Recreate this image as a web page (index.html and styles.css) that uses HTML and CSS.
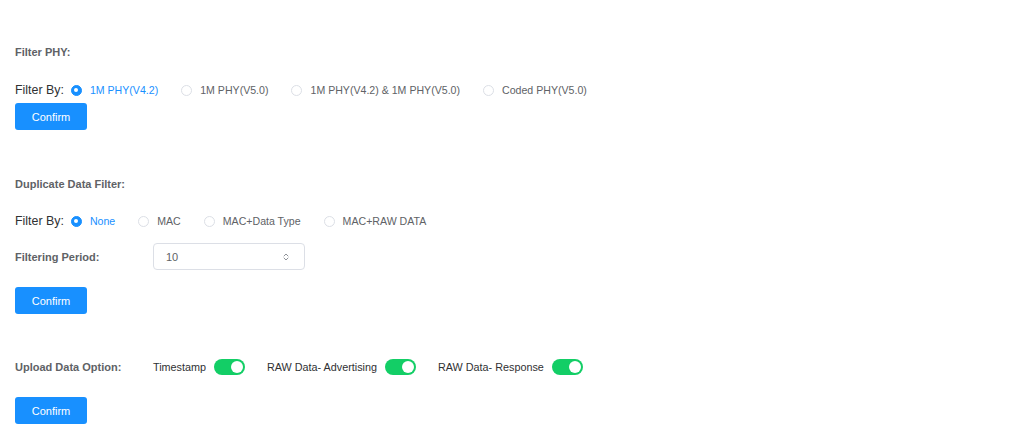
FILE: index.html
```html
<!DOCTYPE html>
<html>
<head>
<meta charset="utf-8">
<link rel="stylesheet" href="styles.css">
</head>
<body>
<div class="page">
  <section class="sec sec-phy">
    <div class="title">Filter PHY:</div>
    <div class="filter-row">
      <span class="filter-by">Filter By:</span>
      <label class="radio checked"><span class="dot"></span><span class="rl">1M PHY(V4.2)</span></label>
      <label class="radio"><span class="dot"></span><span class="rl">1M PHY(V5.0)</span></label>
      <label class="radio"><span class="dot"></span><span class="rl">1M PHY(V4.2) &amp; 1M PHY(V5.0)</span></label>
      <label class="radio"><span class="dot"></span><span class="rl">Coded PHY(V5.0)</span></label>
    </div>
    <button class="btn btn-1">Confirm</button>
  </section>

  <section class="sec sec-dup">
    <div class="title">Duplicate Data Filter:</div>
    <div class="filter-row">
      <span class="filter-by">Filter By:</span>
      <label class="radio checked"><span class="dot"></span><span class="rl">None</span></label>
      <label class="radio"><span class="dot"></span><span class="rl">MAC</span></label>
      <label class="radio"><span class="dot"></span><span class="rl">MAC+Data Type</span></label>
      <label class="radio"><span class="dot"></span><span class="rl">MAC+RAW DATA</span></label>
    </div>
    <div class="form-row period-row">
      <span class="form-label">Filtering Period:</span>
      <div class="num-input">
        <span class="num-val">10</span>
        <svg class="spin" width="8" height="10" viewBox="0 0 8 10"><path d="M2 4 L4 2 L6 4 M2 6 L4 8 L6 6" fill="none" stroke="#909399" stroke-width="1" stroke-linecap="round" stroke-linejoin="round"/></svg>
      </div>
    </div>
    <button class="btn btn-2">Confirm</button>
  </section>

  <section class="sec sec-upload">
    <div class="form-row upload-row">
      <span class="form-label">Upload Data Option:</span>
      <div class="switches">
        <span class="sw-item"><span class="sw-text">Timestamp</span><span class="switch"><span class="knob"></span></span></span>
        <span class="sw-item"><span class="sw-text">RAW Data- Advertising</span><span class="switch"><span class="knob"></span></span></span>
        <span class="sw-item"><span class="sw-text">RAW Data- Response</span><span class="switch"><span class="knob"></span></span></span>
      </div>
    </div>
    <button class="btn btn-3">Confirm</button>
  </section>
</div>
</body>
</html>
```

FILE: styles.css
```css
* { box-sizing: border-box; }
html, body { margin: 0; padding: 0; background: #fff; }
body {
  font-family: "Liberation Sans", Arial, Helvetica, sans-serif;
  color: #606266;
  width: 1014px;
  height: 438px;
  overflow: hidden;
}
.page { padding: 0 15px; }
.sec { display: flex; flex-direction: column; align-items: flex-start; }

.title {
  font-size: 11px;
  font-weight: bold;
  line-height: 16px;
  height: 16px;
  color: #606266;
}
.sec-phy .title { margin-top: 44px; }
.sec-dup .title { margin-top: 46px; }

.filter-row {
  display: flex;
  align-items: center;
  height: 20px;
}
.sec-phy .filter-row { margin-top: 20px; }
.sec-dup .filter-row { margin-top: 19px; }

.filter-by {
  font-size: 12.4px;
  color: #303133;
  margin-right: 7px;
}
.radio {
  display: flex;
  align-items: center;
  margin-right: 23px;
  font-size: 10.6px;
  color: #606266;
}
.radio .dot {
  width: 11px;
  height: 11px;
  border-radius: 50%;
  border: 1px solid #dcdfe6;
  background: #fff;
  margin-right: 8px;
  position: relative;
}
.radio.checked .dot {
  border-color: #1890ff;
  background: #1890ff;
}
.radio.checked .dot::after {
  content: "";
  position: absolute;
  left: 50%;
  top: 50%;
  width: 4px;
  height: 4px;
  margin: -2px 0 0 -2px;
  border-radius: 50%;
  background: #fff;
}
.radio.checked .rl { color: #1890ff; }

.btn {
  width: 72px;
  height: 27px;
  border: none;
  border-radius: 3px;
  background: #1890ff;
  color: #fff;
  font-family: inherit;
  font-size: 11px;
  padding: 0;
  cursor: pointer;
}
.btn-1 { margin-top: 3px; }
.btn-2 { margin-top: 17px; }
.btn-3 { margin-top: 20px; }

.form-row { display: flex; align-items: center; }
.form-label {
  width: 138px;
  font-size: 11px;
  font-weight: bold;
  color: #606266;
}
.period-row { margin-top: 12px; height: 27px; }
.num-input {
  width: 152px;
  height: 27px;
  border: 1px solid #dcdfe6;
  border-radius: 4px;
  display: flex;
  align-items: center;
  justify-content: space-between;
  padding: 0 14px 0 12px;
}
.num-val { font-size: 11px; color: #606266; }
.spin { display: block; }

.upload-row { margin-top: 43px; height: 20px; }
.switches { display: flex; align-items: center; }
.sw-item { display: flex; align-items: center; margin-right: 22px; }
.sw-text { font-size: 10.8px; color: #303133; margin-right: 8px; }
.switch {
  width: 31px;
  height: 16px;
  border-radius: 8px;
  background: #13ce66;
  position: relative;
}
.knob {
  position: absolute;
  right: 2px;
  top: 2px;
  width: 12px;
  height: 12px;
  border-radius: 50%;
  background: #fff;
}
```
